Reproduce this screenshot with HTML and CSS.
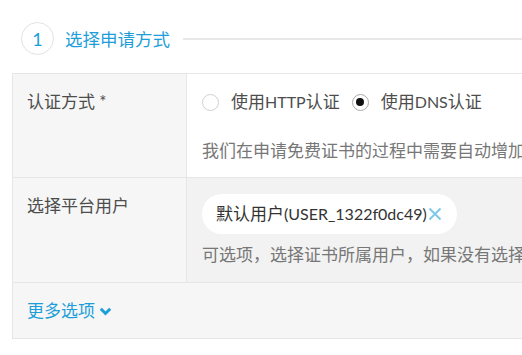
FILE: index.html
```html
<!DOCTYPE html>
<html lang="zh-CN">
<head>
    <meta charset="UTF-8">
    <meta name="viewport" content="width=device-width, initial-scale=1.0">
    <title>申请证书</title>
    <link rel="stylesheet" href="styles.css">
</head>
<body>
    <!-- Step header -->
    <div class="step">
        <span class="step-num">1</span>
        <span class="step-title">选择申请方式</span>
        <span class="step-line"></span>
    </div>

    <!-- Form table -->
    <div class="form-table">
        <div class="form-row">
            <div class="form-label">认证方式 *</div>
            <div class="form-field">
                <div class="radios">
                    <label class="radio"><span class="radio-box"></span>使用<span class="latin">HTTP</span>认证</label>
                    <label class="radio checked"><span class="radio-box"></span>使用<span class="latin">DNS</span>认证</label>
                </div>
                <p class="comment">我们在申请免费证书的过程中需要自动增加DNS记录，请选择DNS服务商</p>
            </div>
        </div>
        <div class="form-row active">
            <div class="form-label">选择平台用户</div>
            <div class="form-field">
                <div class="user-tag">默认用户<span class="latin">(USER_1322f0dc49)</span>
                    <svg class="tag-remove" width="14" height="14" viewBox="0 0 14 14"><path d="M1.5 1.5 L12.5 12.5 M12.5 1.5 L1.5 12.5" stroke="currentColor" stroke-width="2" fill="none"/></svg>
                </div>
                <p class="comment comment-tight">可选项，选择证书所属用户，如果没有选择，则默认为当前登录用户</p>
            </div>
        </div>
        <div class="form-more">
            <a class="more-link" href="#">更多选项
                <svg class="chevron" width="13" height="9" viewBox="0 0 13 9"><polyline points="1.8,1.8 6.5,6.5 11.2,1.8" fill="none" stroke="currentColor" stroke-width="3"/></svg>
            </a>
        </div>
    </div>
</body>
</html>
```

FILE: styles.css
```css
html {
    overflow: hidden;
}
body {
    margin: 0;
    font-family: Lato, "Noto Sans CJK SC", sans-serif;
    font-size: 17px;
    color: #4d4d4d;
    background: #fff;
}
.latin {
    font-size: 16px;
}
.step {
    display: flex;
    align-items: center;
    margin: 22px 0 0 21px;
}
.step-num {
    width: 31px;
    height: 31px;
    border: 1px solid #e2e2e2;
    border-radius: 50%;
    display: flex;
    align-items: center;
    justify-content: center;
    color: #1e9ed9;
    font-size: 18px;
}
.step-title {
    margin-left: 11px;
    color: #1e9ed9;
    font-size: 17.5px;
}
.step-line {
    flex: 1;
    height: 2px;
    background: #e8e8e8;
    margin-left: 13px;
}
.form-table {
    width: 720px;
    margin: 18px 0 0 12px;
    border: 1px solid #e6e6e6;
}
.form-row {
    display: grid;
    grid-template-columns: 174px 1fr;
    border-bottom: 1px solid #e6e6e6;
}
.form-label {
    background: #f6f6f6;
    border-right: 1px solid #e6e6e6;
    padding: 16px 14px;
    line-height: 24px;
}
.form-field {
    padding: 16px 15px 14px;
    line-height: 24px;
}
.form-row.active .form-field {
    background: #f2f2f2;
    padding-top: 16px;
    padding-bottom: 15px;
}
.radios {
    display: flex;
    gap: 12px;
}
.radio {
    display: flex;
    align-items: center;
}
.radio-box {
    width: 15px;
    height: 15px;
    border: 1px solid #cfcfcf;
    border-radius: 50%;
    margin-right: 12px;
    display: flex;
    align-items: center;
    justify-content: center;
}
.radio.checked .radio-box {
    border-color: #aaa;
}
.radio.checked .radio-box::after {
    content: "";
    width: 8px;
    height: 8px;
    border-radius: 50%;
    background: #111;
}
.comment {
    margin: 25px 0 0;
    color: #777;
    white-space: nowrap;
}
.comment-tight {
    margin-top: 9px;
}
.user-tag {
    display: inline-flex;
    align-items: center;
    height: 40px;
    padding: 0 15px 0 14px;
    background: #fff;
    border-radius: 20px;
    color: #333;
}
.tag-remove {
    color: #7fc7e8;
    margin-left: 1px;
}
.form-more {
    background: #f6f6f6;
    padding: 16px 14px 15px;
    line-height: 24px;
}
.more-link {
    color: #1e9ed9;
    text-decoration: none;
    display: inline-flex;
    align-items: center;
}
.chevron {
    margin-left: 4px;
}
```
